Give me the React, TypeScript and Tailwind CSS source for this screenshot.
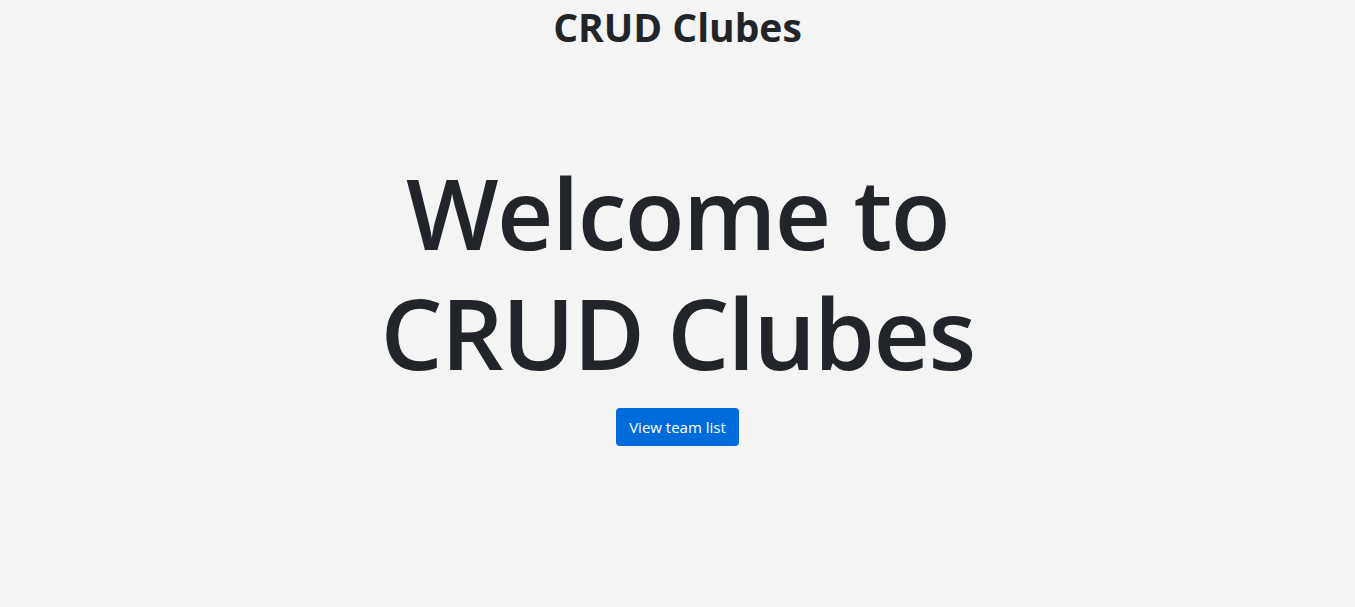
export default function App() {
  return (
    <div className="min-h-[607px] w-full bg-[#f4f4f4] text-[#212529]" style={{ fontFamily: '"Open Sans", "Noto Sans", sans-serif' }}>
      <header className="flex justify-center pt-[2px]">
        <h1 className="text-[39px] font-bold leading-[50px] text-[#212529]">CRUD Clubes</h1>
      </header>
      <main className="flex flex-col items-center pt-[100px]">
        <h2 className="text-center text-[98px] font-semibold leading-[120px] tracking-[-1.6px]">
          <span className="block">Welcome to</span>
          <span className="block">CRUD Clubes</span>
        </h2>
        <button className="mt-[16px] h-[38px] rounded-[4px] bg-[#006bdb] px-[13px] text-[15px] text-white">View team list</button>
      </main>
    </div>
  );
}
